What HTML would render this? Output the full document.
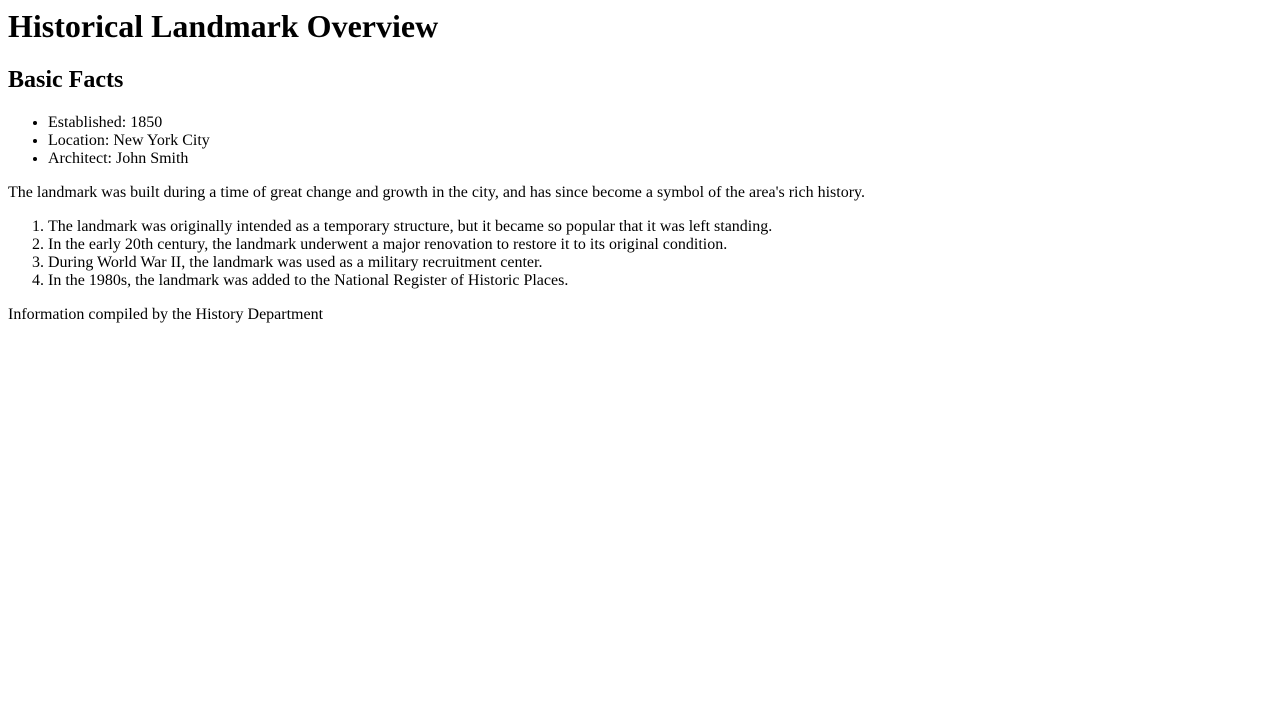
<!DOCTYPE html>
<html><head><meta charset="utf-8"><style>body{font-family:"Liberation Serif",serif;margin:8px;background:#fff;color:#000}</style></head><body>
<h1 style="margin:0 0 22px 0;font-size:32px;line-height:37px">Historical Landmark Overview</h1>
<h2 style="font-size:24px;margin:19px 0 20px 0">Basic Facts</h2>
<ul><li>Established: 1850</li><li>Location: New York City</li><li>Architect: John Smith</li></ul>
<p>The landmark was built during a time of great change and growth in the city, and has since become a symbol of the area's rich history.</p>
<ol><li>The landmark was originally intended as a temporary structure, but it became so popular that it was left standing.</li><li>In the early 20th century, the landmark underwent a major renovation to restore it to its original condition.</li><li>During World War II, the landmark was used as a military recruitment center.</li><li>In the 1980s, the landmark was added to the National Register of Historic Places.</li></ol>
<p>Information compiled by the History Department</p>
</body></html>
